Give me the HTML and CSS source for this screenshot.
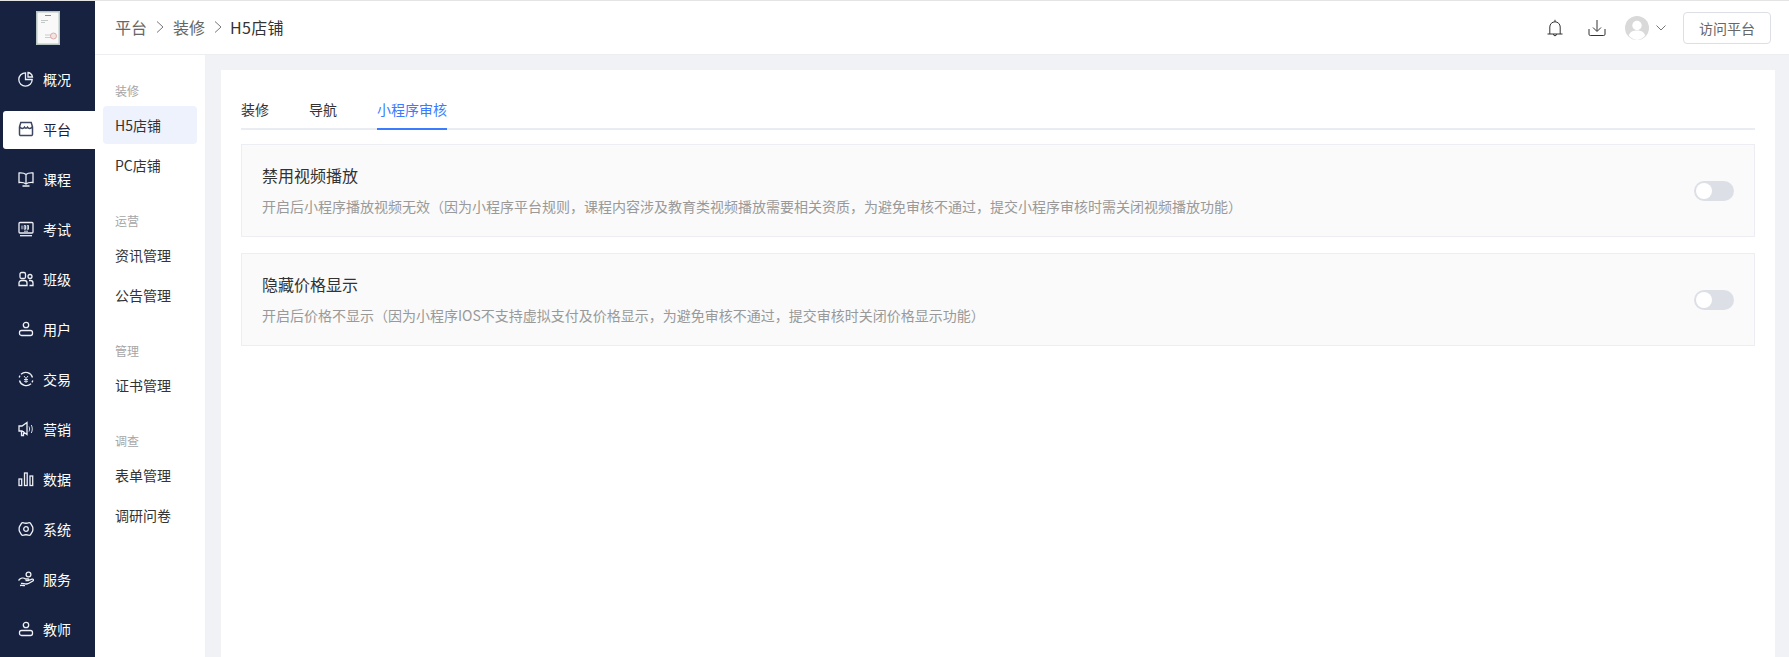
FILE: index.html
```html
<!DOCTYPE html>
<html lang="zh-CN">
<head>
<meta charset="utf-8">
<title>H5店铺</title>
<link rel="stylesheet" href="styles.css">
</head>
<body>
<div class="app">
  <aside class="nav">
    <div class="logo">
      <svg viewBox="0 0 24 34" width="24" height="34">
        <rect width="24" height="34" fill="#c3d0cc"/>
        <rect x="1" y="1" width="22" height="32" fill="#f8f9f8" stroke="#9fb2ac" stroke-width=".7"/>
        <path d="M9 4.500h6" stroke="#7f8f8a" stroke-width="1"/>
        <path d="M5 9.500h7M5 11.500h4" stroke="#a9b3b0" stroke-width=".7"/>
        <path d="M9 24h6M9 26.500h6" stroke="#bcc3c1" stroke-width=".8"/>
        <circle cx="17.500" cy="25" r="3" fill="#f3e4e4" stroke="#d79a9a" stroke-width=".8"/>
      </svg>
    </div>
    <a class="nav-item"><svg class="ico" viewBox="0 0 16 16"><path d="M7.500 1.800A6.700 6.700 0 1 0 14.200 8.500H7.500z"/><path d="M10 1.500a5.500 5.500 0 0 1 4.500 4.500H10z"/></svg><span>概况</span></a>
    <a class="nav-item active"><svg class="ico" viewBox="0 0 16 16"><path d="M2.800 1.500h10.400l1.300 4.300v7.500a1.300 1.300 0 0 1-1.300 1.300H2.800a1.300 1.300 0 0 1-1.300-1.300V5.800z"/><path d="M1.500 5.800c1.800 2.200 3.800 2.200 5 .4.700 1.300 2.300 1.300 3 0 1.200 1.800 3.200 1.800 5-.4"/></svg><span>平台</span></a>
    <a class="nav-item"><svg class="ico" viewBox="0 0 16 16"><path d="M8 3.500C6.500 2.200 4 1.800 1 2v9.500c3-.2 5.500.2 7 1.500 1.500-1.300 4-1.700 7-1.500V2c-3-.2-5.500.2-7 1.500zM8 3.500V13M4.500 15h7"/></svg><span>课程</span></a>
    <a class="nav-item"><svg class="ico" viewBox="0 0 16 16"><rect x="1" y="1.500" width="14" height="10.500" rx="1"/><path d="M2 14.700h12"/><path class="thin" d="M4 4.500v3.800M6.200 4.500h1.300v3.800H6.200zM9.200 4.500h1.300v3.800H9.200zM6 10.200h4"/></svg><span>考试</span></a>
    <a class="nav-item"><svg class="ico" viewBox="0 0 16 16"><rect x="2" y="1.500" width="5.500" height="6" rx="1.500"/><path d="M1 14.500v-2.500a2.500 2.500 0 0 1 2.500-2.500h3A2.500 2.500 0 0 1 9 12v2.500z"/><circle cx="12" cy="5.500" r="2"/><path d="M11 9.500h1.500a2.500 2.500 0 0 1 2.500 2.500v2.500h-3.500"/></svg><span>班级</span></a>
    <a class="nav-item"><svg class="ico" viewBox="0 0 16 16"><circle cx="8" cy="4" r="2.700"/><rect x="1.500" y="9.500" width="13" height="5" rx="2"/></svg><span>用户</span></a>
    <a class="nav-item"><svg class="ico" viewBox="0 0 16 16"><path d="M14.500 6.500A7 7 0 0 0 3 3.200M1.500 9.500A7 7 0 0 0 13 12.800M14.800 9.500a7 7 0 0 1-.8 1.800M1.200 6.500a7 7 0 0 1 .8-1.800"/><path class="thin" d="M6 5l2 2.500L10 5M8 7.500V12M6 8.500h4M6 10.300h4"/></svg><span>交易</span></a>
    <a class="nav-item"><svg class="ico" viewBox="0 0 16 16"><path d="M1 5h3l5-3.500v12L4 10H1zM3.500 10v4.500h2V10"/><path class="thin" d="M11 5.500c.8 1.500.8 3.500 0 5M13.300 4c1.300 2.500 1.300 5.500 0 8"/></svg><span>营销</span></a>
    <a class="nav-item"><svg class="ico" viewBox="0 0 16 16"><rect x="1" y="8" width="2.700" height="6.500"/><rect x="6.500" y="2" width="2.700" height="12.500"/><rect x="12" y="5" width="2.700" height="9.500"/></svg><span>数据</span></a>
    <a class="nav-item"><svg class="ico" viewBox="0 0 16 16"><path d="M5.500 1.800c1 .6 4 .6 5 0 1-.3 1.700 0 2.200.8l1.800 3c.5.800.5 4 0 4.800l-1.800 3c-.5.800-1.200 1.100-2.200.8-1-.6-4-.6-5 0-1 .3-1.700 0-2.200-.8l-1.800-3c-.5-.8-.5-4 0-4.800l1.800-3c.5-.8 1.200-1.100 2.200-.8z"/><circle cx="8" cy="8" r="2.300"/></svg><span>系统</span></a>
    <a class="nav-item"><svg class="ico" viewBox="0 0 16 16"><circle cx="10.500" cy="3.500" r="2.400"/><path d="M.5 9.500c2-2.500 5-3 7-1.500h2.800c.8 0 .8 1.700 0 1.700H7.500M10.500 9.500l3.500-1.300c1.500-.4 2 1 .8 1.800C12 12 10 13 8 13c-2 0-3-1-5-.5M2 14.500c2-.5 3 0 5 .2"/></svg><span>服务</span></a>
    <a class="nav-item"><svg class="ico" viewBox="0 0 16 16"><circle cx="8" cy="4" r="2.700"/><rect x="1.500" y="9.500" width="13" height="5" rx="2"/></svg><span>教师</span></a>
  </aside>

  <div class="main">
    <header class="top">
      <nav class="crumbs">
        <span>平台</span><svg class="sep" viewBox="0 0 10 14"><path d="M2 1.500 8 7l-6 5.500"/></svg>
        <span>装修</span><svg class="sep" viewBox="0 0 10 14"><path d="M2 1.500 8 7l-6 5.500"/></svg>
        <span class="cur">H5店铺</span>
      </nav>
      <div class="tools">
        <svg class="tool bell" viewBox="0 0 18 18"><path d="M1.500 15h15M3.800 15V8a5.200 5.200 0 0 1 10.400 0v7M9 .8v2M7.500 15a1.500 1.800 0 0 0 3 0"/></svg>
        <svg class="tool dl" viewBox="0 0 18 18"><path d="M1 10v5.200a1.300 1.300 0 0 0 1.300 1.300h13.400a1.300 1.300 0 0 0 1.300-1.300V10M9 1v11M5 8.500 9 12.500l4-4"/></svg>
        <svg class="avatar" viewBox="0 0 24 24"><circle cx="12" cy="12" r="12" fill="#d9d9d9"/><circle cx="12" cy="9.500" r="4.700" fill="#fff"/><path d="M3.800 19.500c1-3.700 4.500-5 8.200-5s7.200 1.300 8.200 5A12 12 0 0 1 12 24a12 12 0 0 1-8.200-4.500z" fill="#fff"/></svg>
        <svg class="caret" viewBox="0 0 10 6"><path d="M.5.500 5 5 9.500.5"/></svg>
        <button class="visit">访问平台</button>
      </div>
    </header>

    <div class="body">
      <aside class="sub">
        <div class="sub-title first">装修</div>
        <a class="sub-item on">H5店铺</a>
        <a class="sub-item">PC店铺</a>
        <div class="sub-title">运营</div>
        <a class="sub-item">资讯管理</a>
        <a class="sub-item">公告管理</a>
        <div class="sub-title">管理</div>
        <a class="sub-item">证书管理</a>
        <div class="sub-title">调查</div>
        <a class="sub-item">表单管理</a>
        <a class="sub-item">调研问卷</a>
      </aside>
      <main class="content">
        <div class="card">
          <div class="tabs">
            <a class="tab">装修</a>
            <a class="tab">导航</a>
            <a class="tab sel">小程序审核</a>
          </div>
          <section class="panel">
            <div class="panel-text">
              <h3>禁用视频播放</h3>
              <p>开启后小程序播放视频无效（因为小程序平台规则，课程内容涉及教育类视频播放需要相关资质，为避免审核不通过，提交小程序审核时需关闭视频播放功能）</p>
            </div>
            <span class="switch"></span>
          </section>
          <section class="panel">
            <div class="panel-text">
              <h3>隐藏价格显示</h3>
              <p>开启后价格不显示（因为小程序IOS不支持虚拟支付及价格显示，为避免审核不通过，提交审核时关闭价格显示功能）</p>
            </div>
            <span class="switch"></span>
          </section>
        </div>
      </main>
    </div>
  </div>
</div>
</body>
</html>
```
FILE: styles.css
```css
* { box-sizing: border-box; }
html, body { margin: 0; height: 100%; overflow: hidden; }
body {
  font-family: "Noto Sans CJK SC", "Noto Sans", sans-serif;
  font-size: 14px;
  color: #333;
  background: #fff;
}
.app {
  display: flex;
  height: 657px;
  border-top: 1px solid #e4e4e4;
}
.nav {
  width: 95px;
  flex: none;
  background: #162240;
  display: flex;
  flex-direction: column;
  overflow: hidden;
}
.logo {
  height: 54px;
  flex: none;
  display: flex;
  justify-content: center;
  padding-top: 10px;
  margin-bottom: 6px;
}
.nav-item {
  height: 38px;
  flex: none;
  margin-left: 3px;
  margin-bottom: 12px;
  display: flex;
  align-items: center;
  gap: 9px;
  padding: 0 0 2px 15px;
  color: #fff;
  border-radius: 3px 0 0 3px;
}
.nav-item.active {
  background: #fff;
  color: #162240;
}
.ico {
  width: 16px;
  height: 16px;
  flex: none;
  fill: none;
  stroke: #eef0f5;
  stroke-width: 1.300;
}
.ico .thin { stroke-width: .9; }
.active .ico { stroke: #3d4763; stroke-width: 1.500; }
.main {
  flex: 1;
  min-width: 0;
  display: flex;
  flex-direction: column;
}
.top {
  height: 54px;
  flex: none;
  border-bottom: 1px solid #eceef2;
  display: flex;
  align-items: center;
  justify-content: space-between;
  padding: 0 18px 0 20px;
}
.crumbs {
  display: flex;
  align-items: center;
  font-size: 16px;
  color: #666;
  padding-bottom: 2px;
}
.crumbs .cur { color: #333; letter-spacing: .3px; margin-left: -1px; }
.sep {
  width: 10px;
  height: 14px;
  margin: 0 8px;
  fill: none;
  stroke: #777;
  stroke-width: 1;
}
.tools { display: flex; align-items: center; }
.tool {
  width: 18px;
  height: 18px;
  fill: none;
  stroke: #333;
  stroke-width: 1;
}
.bell { margin-right: 24px; }
.dl { margin-right: 19px; }
.avatar { width: 24px; height: 24px; }
.caret {
  width: 10px;
  height: 6px;
  margin: 0 17px 0 7px;
  fill: none;
  stroke: #777;
  stroke-width: 1;
}
.visit {
  width: 88px;
  height: 32px;
  background: #fff;
  border: 1px solid #dcdfe6;
  border-radius: 4px;
  font: inherit;
  font-size: 14px;
  color: #666;
  padding: 0;
}
.body { flex: 1; display: flex; min-height: 0; }
.sub {
  width: 110px;
  flex: none;
  padding: 0 8px;
  background: #fff;
}
.sub-title {
  height: 20px;
  line-height: 20px;
  font-size: 12px;
  color: #a6a6a6;
  padding-left: 12px;
  margin-top: 27px;
  margin-bottom: 5px;
}
.sub-title.first { margin-top: 26px; }
.sub-item {
  display: block;
  height: 38px;
  line-height: 38px;
  margin-bottom: 2px;
  padding-left: 12px;
  color: #333;
  border-radius: 4px;
}
.sub-item.on { background: #eef2fc; }
.content {
  flex: 1;
  min-width: 0;
  background: #f0f2f5;
  padding: 15px 14px 0 16px;
}
.card {
  height: 100%;
  background: #fff;
  padding: 20px 20px 0;
}
.tabs {
  display: flex;
  gap: 40px;
  height: 40px;
  border-bottom: 2px solid #e9ecf3;
  margin-bottom: 14px;
}
.tab {
  height: 40px;
  line-height: 38px;
  color: #333;
}
.tab.sel {
  color: #3b7cff;
  border-bottom: 2px solid #3b7cff;
}
.panel {
  height: 93px;
  margin-bottom: 16px;
  background: #fafafa;
  border: 1px solid #eceef4;
  display: flex;
  align-items: center;
  justify-content: space-between;
  padding: 0 20px;
}
.panel-text { padding-bottom: 2px; }
.panel h3 {
  margin: 0 0 9px;
  font-size: 16px;
  font-weight: 400;
  line-height: 24px;
  color: #333;
}
.panel p {
  margin: 0;
  font-size: 14px;
  line-height: 20px;
  color: #999;
}
.switch {
  position: relative;
  width: 40px;
  height: 20px;
  border-radius: 10px;
  background: #dcdfe6;
  flex: none;
}
.switch::after {
  content: "";
  position: absolute;
  left: 2px;
  top: 2px;
  width: 16px;
  height: 16px;
  border-radius: 50%;
  background: #fff;
}
```
